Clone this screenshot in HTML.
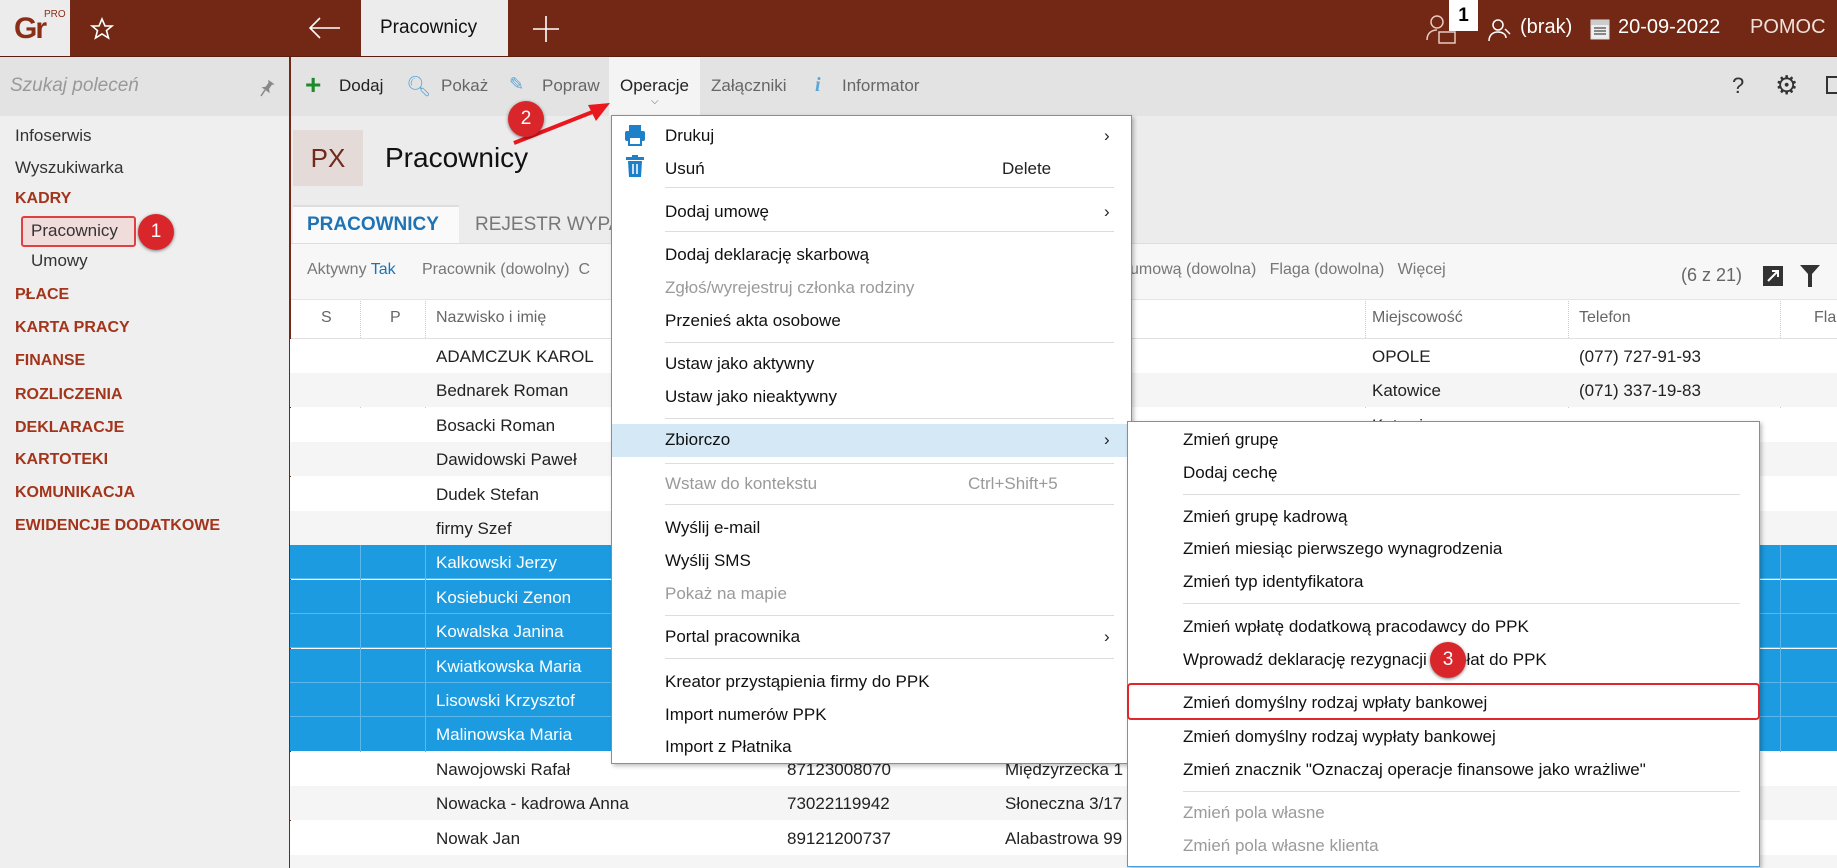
<!DOCTYPE html>
<html><head><meta charset="utf-8">
<style>
*{margin:0;padding:0;box-sizing:border-box}
html{width:1837px;height:868px;overflow:hidden}
body{width:1837px;height:868px;overflow:hidden;position:relative;background:#fff;font-family:"Liberation Sans",sans-serif;font-size:17px;color:#222}
.a{position:absolute;white-space:nowrap}
.side{color:#333}
.red{color:#a3351c;font-weight:bold;font-size:16px}
.mi{position:absolute;left:665px;height:30px;line-height:30px;font-size:17px;color:#111}
.g{color:#9a9a9a!important}
.sep{position:absolute;height:1px;background:#ddd}
.si{position:absolute;left:1183px;height:30px;line-height:30px;font-size:17px;color:#111}
.row{position:absolute;left:290px;width:1547px;height:34px}
.row span{position:absolute;top:8px;font-size:17px}
.badge{position:absolute;width:36px;height:36px;border-radius:50%;background:#d9262b;color:#fff;font-size:19px;text-align:center;line-height:36px;box-shadow:0 1px 3px rgba(0,0,0,.5)}
</style></head><body>
<div class="a" style="left:0;top:0;width:1837px;height:57px;background:#722814"></div>
<div class="a" style="left:0;top:0;width:70px;height:57px;background:#ececec"></div>
<div class="a" style="left:14px;top:12px;font-size:30px;color:#8a2e18;font-weight:bold;letter-spacing:-2px">Gr</div>
<div class="a" style="left:44px;top:9px;font-size:10px;color:#8a2e18">PRO</div>
<svg class="a" style="left:90px;top:17px" width="24" height="24" viewBox="0 0 24 24"><path d="M12 2l3 7h7l-5.5 4.5 2 7.5L12 17l-6.5 4 2-7.5L2 9h7z" fill="none" stroke="#fff" stroke-width="1.6"/></svg>
<svg class="a" style="left:308px;top:16px" width="34" height="24" viewBox="0 0 34 24"><path d="M2 12h30M12 2L2 12l10 10" fill="none" stroke="#fff" stroke-width="1.6"/></svg>
<div class="a" style="left:361px;top:0;width:147px;height:57px;background:#ececec"></div>
<div class="a" style="left:380px;top:17px;font-size:19px;color:#111">Pracownicy</div>
<svg class="a" style="left:533px;top:16px" width="26" height="26"><path d="M13 0v26M0 13h26" stroke="#fff" stroke-width="1.6"/></svg>
<svg class="a" style="left:1425px;top:12px" width="34" height="36" viewBox="0 0 34 36"><circle cx="12" cy="10" r="6" fill="none" stroke="#e8c9c0" stroke-width="1.5"/><path d="M2 28c0-8 6-10 10-10" fill="none" stroke="#e8c9c0" stroke-width="1.5"/><rect x="14" y="20" width="16" height="11" fill="none" stroke="#e8c9c0" stroke-width="1.5"/></svg>
<div class="a" style="left:1449px;top:0;width:29px;height:31px;background:#fff;color:#000;font-weight:bold;font-size:19px;text-align:center;line-height:31px">1</div>
<svg class="a" style="left:1488px;top:17px" width="26" height="26" viewBox="0 0 26 26"><circle cx="10" cy="8" r="5" fill="none" stroke="#fff" stroke-width="1.5"/><path d="M1 24c0-7 5-9 9-9s8 2 8 6M17 12l5 5" fill="none" stroke="#fff" stroke-width="1.5"/></svg>
<div class="a" style="left:1520px;top:16px;font-size:20px;color:#fff">(brak)</div>
<svg class="a" style="left:1590px;top:19px" width="20" height="21"><rect x="1" y="1" width="18" height="19" fill="#eee" stroke="#ddd"/><rect x="1" y="1" width="18" height="5" fill="#ccc"/><path d="M4 9h12M4 12h12M4 15h12" stroke="#666" stroke-width="1.5"/></svg>
<div class="a" style="left:1618px;top:16px;font-size:20px;color:#fff">20-09-2022</div>
<div class="a" style="left:1750px;top:16px;font-size:20px;color:#f0e0da">POMOC</div>
<div class="a" style="left:0;top:57px;width:289px;height:811px;background:#efefef"></div>
<div class="a" style="left:0;top:57px;width:289px;height:59px;background:#e3e3e3"></div>
<div class="a" style="left:10px;top:75px;font-size:19px;color:#999;font-style:italic">Szukaj poleceń</div>
<svg class="a" style="left:257px;top:78px" width="18" height="20" viewBox="0 0 18 20"><path d="M6 2h8l-2 2v5l3 3H5l3-3V4z" fill="#888" transform="rotate(35 9 10)"/><path d="M4 18l4-6" stroke="#888" stroke-width="1.5"/></svg>
<div class="a" style="left:289px;top:57px;width:2px;height:811px;background:#722814"></div>
<div class="a side" style="left:15px;top:126px">Infoserwis</div>
<div class="a side" style="left:15px;top:158px">Wyszukiwarka</div>
<div class="a red" style="left:15px;top:190px">KADRY</div>
<div class="a" style="left:21px;top:216px;width:115px;height:31px;border:2px solid #e04040;border-radius:3px;background:#f1dcdc"></div>
<div class="a side" style="left:31px;top:221px">Pracownicy</div>
<div class="a side" style="left:31px;top:251px">Umowy</div>
<div class="a red" style="left:15px;top:286px">PŁACE</div>
<div class="a red" style="left:15px;top:319px">KARTA PRACY</div>
<div class="a red" style="left:15px;top:352px">FINANSE</div>
<div class="a red" style="left:15px;top:386px">ROZLICZENIA</div>
<div class="a red" style="left:15px;top:419px">DEKLARACJE</div>
<div class="a red" style="left:15px;top:451px">KARTOTEKI</div>
<div class="a red" style="left:15px;top:484px">KOMUNIKACJA</div>
<div class="a red" style="left:15px;top:517px">EWIDENCJE DODATKOWE</div>
<div class="badge" style="left:138px;top:214px">1</div>
<div class="a" style="left:291px;top:57px;width:1546px;height:59px;background:#e3e3e3"></div>
<div class="a" style="left:609px;top:57px;width:91px;height:59px;background:#f4f4f4"></div>
<div class="a" style="left:305px;top:71px;font-size:28px;color:#1e8a2a;font-weight:bold;line-height:28px">+</div>
<div class="a" style="left:339px;top:76px">Dodaj</div>
<div class="a" style="left:406px;top:74px;font-size:20px;color:#5aa6d6">&#x1F50D;&#xFE0E;</div>
<div class="a" style="left:441px;top:76px;color:#666">Pokaż</div>
<div class="a" style="left:509px;top:74px;font-size:18px;color:#5aa6d6">&#x270E;</div>
<div class="a" style="left:542px;top:76px;color:#666">Popraw</div>
<div class="a" style="left:620px;top:76px">Operacje</div>
<div class="a" style="left:651px;top:96px;font-size:10px;color:#666">&#x2335;</div>
<div class="a" style="left:711px;top:76px;color:#666">Załączniki</div>
<div class="a" style="left:815px;top:74px;font-size:20px;color:#5aa6d6;font-style:italic;font-weight:bold;font-family:'Liberation Serif',serif">i</div>
<div class="a" style="left:842px;top:76px;color:#666">Informator</div>
<div class="a" style="left:1732px;top:73px;font-size:22px;color:#333">?</div>
<div class="a" style="left:1775px;top:70px;font-size:26px;color:#333">&#x2699;&#xFE0E;</div>
<div class="a" style="left:1826px;top:76px;width:14px;height:18px;border:2px solid #333"></div>
<div class="a" style="left:291px;top:116px;width:1546px;height:89px;background:#ececec"></div>
<div class="a" style="left:293px;top:130px;width:70px;height:56px;background:#e4dad8;color:#6e2a1a;font-size:26px;text-align:center;line-height:56px">PX</div>
<div class="a" style="left:385px;top:142px;font-size:28px;color:#111">Pracownicy</div>
<div class="a" style="left:291px;top:205px;width:1546px;height:38px;background:#ececec"></div>
<div class="a" style="left:293px;top:205px;width:166px;height:38px;background:#fafafa;border-top:2px solid #ddd"></div>
<div class="a" style="left:307px;top:214px;font-size:19px;color:#1f73b5;font-weight:bold">PRACOWNICY</div>
<div class="a" style="left:475px;top:214px;font-size:19px;color:#777">REJESTR WYPA</div>
<div class="a" style="left:291px;top:243px;width:1546px;height:57px;background:#f7f7f7;border-top:1px solid #ddd;border-bottom:1px solid #e4e4e4"></div>
<div class="a" style="left:307px;top:261px;font-size:16px;color:#777">Aktywny <span style="color:#1f73b5">Tak</span></div>
<div class="a" style="left:422px;top:261px;font-size:16px;color:#777">Pracownik (dowolny)&nbsp;&nbsp;C</div>
<div class="a" style="left:1130px;top:261px;font-size:16px;color:#777">umową (dowolna)&nbsp;&nbsp;&nbsp;Flaga (dowolna)&nbsp;&nbsp;&nbsp;Więcej</div>
<div class="a" style="left:1681px;top:265px;font-size:18px;color:#666">(6 z 21)</div>
<div class="a" style="left:1763px;top:266px;width:20px;height:20px;background:#333"></div>
<svg class="a" style="left:1766px;top:269px" width="14" height="14"><path d="M2 12L12 2M6 2h6v6" stroke="#fff" stroke-width="2" fill="none"/></svg>
<svg class="a" style="left:1800px;top:265px" width="20" height="22"><path d="M0 0h20L12 9v13H8V9z" fill="#333"/></svg>
<div class="a" style="left:291px;top:301px;width:1546px;height:38px;background:#fff;border-bottom:1px solid #e0e0e0"></div>
<div class="a" style="left:321px;top:309px;color:#666;font-size:16px">S</div>
<div class="a" style="left:390px;top:309px;color:#666;font-size:16px">P</div>
<div class="a" style="left:436px;top:309px;color:#666;font-size:16px">Nazwisko i imię</div>
<div class="a" style="left:1372px;top:309px;color:#666;font-size:16px">Miejscowość</div>
<div class="a" style="left:1579px;top:309px;color:#666;font-size:16px">Telefon</div>
<div class="a" style="left:1814px;top:309px;color:#666;font-size:16px">Fla</div>
<div class="a" style="left:360px;top:301px;height:567px;border-left:1px dotted #ccc"></div>
<div class="a" style="left:425px;top:301px;height:567px;border-left:1px dotted #ccc"></div>
<div class="a" style="left:1365px;top:301px;height:567px;border-left:1px dotted #ccc"></div>
<div class="a" style="left:1568px;top:301px;height:567px;border-left:1px dotted #ccc"></div>
<div class="a" style="left:1780px;top:301px;height:567px;border-left:1px dotted #ccc"></div>
<div class="row" style="top:339px;background:#fff"><span style="left:146px">ADAMCZUK KAROL</span><span style="left:1082px">OPOLE</span><span style="left:1289px">(077) 727-91-93</span></div>
<div class="row" style="top:373px;background:#f5f5f5"><span style="left:146px">Bednarek Roman</span><span style="left:1082px">Katowice</span><span style="left:1289px">(071) 337-19-83</span></div>
<div class="row" style="top:408px;background:#fff"><span style="left:146px">Bosacki Roman</span><span style="left:1082px">Katowice</span></div>
<div class="row" style="top:442px;background:#f5f5f5"><span style="left:146px">Dawidowski Paweł</span></div>
<div class="row" style="top:477px;background:#fff"><span style="left:146px">Dudek Stefan</span></div>
<div class="row" style="top:511px;background:#f5f5f5"><span style="left:146px">firmy Szef</span></div>
<div class="row" style="top:545px;background:#1c9be0;color:#fff;border-bottom:1px solid #5ab8ea"><span style="left:146px">Kalkowski Jerzy</span></div>
<div class="row" style="top:580px;background:#1c9be0;color:#fff;border-bottom:1px solid #5ab8ea"><span style="left:146px">Kosiebucki Zenon</span></div>
<div class="row" style="top:614px;background:#1c9be0;color:#fff;border-bottom:1px solid #5ab8ea"><span style="left:146px">Kowalska Janina</span></div>
<div class="row" style="top:649px;background:#1c9be0;color:#fff;border-bottom:1px solid #5ab8ea"><span style="left:146px">Kwiatkowska Maria</span></div>
<div class="row" style="top:683px;background:#1c9be0;color:#fff;border-bottom:1px solid #5ab8ea"><span style="left:146px">Lisowski Krzysztof</span></div>
<div class="row" style="top:717px;background:#1c9be0;color:#fff"><span style="left:146px">Malinowska Maria</span></div>
<div class="a" style="left:360px;top:545px;width:1px;height:207px;background:#5ab8ea"></div>
<div class="a" style="left:425px;top:545px;width:1px;height:207px;background:#5ab8ea"></div>
<div class="a" style="left:1780px;top:545px;width:1px;height:207px;background:#5ab8ea"></div>
<div class="row" style="top:752px;background:#fff"><span style="left:146px">Nawojowski Rafał</span><span style="left:497px">87123008070</span><span style="left:715px">Międzyrzecka 1</span></div>
<div class="row" style="top:786px;background:#f5f5f5"><span style="left:146px">Nowacka - kadrowa Anna</span><span style="left:497px">73022119942</span><span style="left:715px">Słoneczna 3/17</span></div>
<div class="row" style="top:821px;background:#fff"><span style="left:146px">Nowak Jan</span><span style="left:497px">89121200737</span><span style="left:715px">Alabastrowa 99</span></div>
<div class="row" style="top:855px;height:13px;background:#f5f5f5"></div>
<div class="a" style="left:611px;top:115px;width:521px;height:649px;background:#fff;border:1px solid #4aa0dc;box-shadow:2px 2px 4px rgba(0,0,0,.25)"></div>
<svg class="a" style="left:624px;top:124px" width="22" height="22"><rect x="5" y="1" width="12" height="6" fill="#1e80c8"/><rect x="1" y="7" width="20" height="10" rx="2" fill="#1e80c8"/><rect x="5" y="13" width="12" height="8" fill="#fff" stroke="#1e80c8" stroke-width="2"/></svg>
<svg class="a" style="left:626px;top:155px" width="18" height="22"><rect x="0" y="2" width="18" height="3" fill="#1e80c8"/><rect x="6" y="0" width="6" height="3" fill="#1e80c8"/><path d="M2 6h14l-1 16H3z" fill="#1e80c8"/><path d="M7 9v10M11 9v10" stroke="#fff" stroke-width="1.5"/></svg>
<div class="mi" style="top:121px">Drukuj</div><div class="a" style="left:1104px;top:121px;line-height:30px">›</div>
<div class="mi" style="top:154px">Usuń</div><div class="a" style="left:1002px;top:154px;line-height:30px">Delete</div>
<div class="sep" style="left:665px;top:187px;width:449px"></div>
<div class="mi" style="top:197px">Dodaj umowę</div><div class="a" style="left:1104px;top:197px;line-height:30px">›</div>
<div class="sep" style="left:665px;top:231px;width:449px"></div>
<div class="mi" style="top:240px">Dodaj deklarację skarbową</div>
<div class="mi g" style="top:273px">Zgłoś/wyrejestruj członka rodziny</div>
<div class="mi" style="top:306px">Przenieś akta osobowe</div>
<div class="sep" style="left:665px;top:342px;width:449px"></div>
<div class="mi" style="top:349px">Ustaw jako aktywny</div>
<div class="mi" style="top:382px">Ustaw jako nieaktywny</div>
<div class="sep" style="left:665px;top:418px;width:449px"></div>
<div class="a" style="left:612px;top:424px;width:519px;height:33px;background:#d5e8f6"></div>
<div class="mi" style="top:425px">Zbiorczo</div><div class="a" style="left:1104px;top:425px;line-height:30px">›</div>
<div class="sep" style="left:665px;top:463px;width:449px"></div>
<div class="mi g" style="top:469px">Wstaw do kontekstu</div><div class="a g" style="left:968px;top:469px;line-height:30px">Ctrl+Shift+5</div>
<div class="sep" style="left:665px;top:504px;width:449px"></div>
<div class="mi" style="top:513px">Wyślij e-mail</div>
<div class="mi" style="top:546px">Wyślij SMS</div>
<div class="mi g" style="top:579px">Pokaż na mapie</div>
<div class="sep" style="left:665px;top:615px;width:449px"></div>
<div class="mi" style="top:622px">Portal pracownika</div><div class="a" style="left:1104px;top:622px;line-height:30px">›</div>
<div class="sep" style="left:665px;top:658px;width:449px"></div>
<div class="mi" style="top:667px">Kreator przystąpienia firmy do PPK</div>
<div class="mi" style="top:700px">Import numerów PPK</div>
<div class="mi" style="top:732px">Import z Płatnika</div>
<div class="a" style="left:1127px;top:421px;width:633px;height:446px;background:#fff;border:1px solid #4aa0dc;box-shadow:2px 2px 4px rgba(0,0,0,.25)"></div>
<div class="si" style="top:425px">Zmień grupę</div>
<div class="si" style="top:458px">Dodaj cechę</div>
<div class="sep" style="left:1183px;top:494px;width:557px"></div>
<div class="si" style="top:502px">Zmień grupę kadrową</div>
<div class="si" style="top:534px">Zmień miesiąc pierwszego wynagrodzenia</div>
<div class="si" style="top:567px">Zmień typ identyfikatora</div>
<div class="sep" style="left:1183px;top:603px;width:557px"></div>
<div class="si" style="top:612px">Zmień wpłatę dodatkową pracodawcy do PPK</div>
<div class="si" style="top:645px">Wprowadź deklarację rezygnacji z wpłat do PPK</div>
<div class="a" style="left:1127px;top:683px;width:633px;height:37px;border:2px solid #e0262b;border-radius:4px"></div>
<div class="si" style="top:688px">Zmień domyślny rodzaj wpłaty bankowej</div>
<div class="si" style="top:722px">Zmień domyślny rodzaj wypłaty bankowej</div>
<div class="si" style="top:755px">Zmień znacznik "Oznaczaj operacje finansowe jako wrażliwe"</div>
<div class="sep" style="left:1183px;top:791px;width:557px"></div>
<div class="si g" style="top:798px">Zmień pola własne</div>
<div class="si g" style="top:831px">Zmień pola własne klienta</div>
<div class="badge" style="left:1430px;top:642px">3</div>
<svg class="a" style="left:500px;top:95px" width="120" height="60"><path d="M14 48L100 14" stroke="#e8181e" stroke-width="4"/><path d="M110 8L88 10l8 16z" fill="#e8181e"/></svg>
<div class="badge" style="left:508px;top:101px">2</div>
<div class="a" style="left:0;top:56px;width:1837px;height:1px;background:#5a1e10"></div>
</body></html>
